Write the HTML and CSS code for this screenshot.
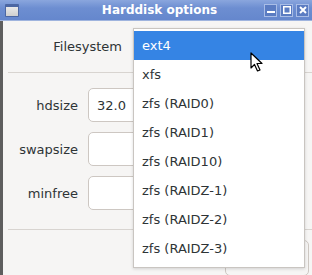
FILE: index.html
```html
<!DOCTYPE html>
<html lang="en">
<head>
    <meta charset="UTF-8">
    <title>Harddisk options</title>
    <link rel="stylesheet" href="styles.css">
</head>
<body>

    <div class="window">
        <!-- title bar -->
        <div class="titlebar">
            <span class="app-icon"></span>
            <span class="title">Harddisk options</span>
            <div class="wm-buttons">
                <span class="wm-btn"><svg width="8" height="8" viewBox="0 0 8 8"><rect x="0" y="5" width="8" height="2" fill="#fff"/></svg></span>
                <span class="wm-btn"><svg width="8" height="8" viewBox="0 0 8 8"><rect x="0.75" y="0.75" width="6.5" height="6.5" fill="none" stroke="#fff" stroke-width="1.5"/></svg></span>
                <span class="wm-btn"><svg width="8" height="8" viewBox="0 0 8 8"><path d="M1 1L7 7M7 1L1 7" stroke="#fff" stroke-width="2"/></svg></span>
            </div>
        </div>

        <div class="content">
            <div class="fs-row">
                <label class="fs-label">Filesystem</label>
                <div class="combo">ext4</div>
            </div>
            <div class="sep"></div>

            <div class="field">
                <label>hdsize</label>
                <input type="text" value="32.0">
            </div>
            <div class="field">
                <label>swapsize</label>
                <input type="text">
            </div>
            <div class="field">
                <label>minfree</label>
                <input type="text">
            </div>

            <div class="sep bottom-sep"></div>
            <div class="actions">
                <button>OK</button>
            </div>
        </div>

        <!-- open filesystem dropdown -->
        <ul class="popup">
            <li class="active">ext4</li>
            <li>xfs</li>
            <li>zfs (RAID0)</li>
            <li>zfs (RAID1)</li>
            <li>zfs (RAID10)</li>
            <li>zfs (RAIDZ-1)</li>
            <li>zfs (RAIDZ-2)</li>
            <li>zfs (RAIDZ-3)</li>
        </ul>

        <svg class="cursor" width="14" height="21" viewBox="0 0 14 21">
            <path d="M1 1 L1 16 L4.5 12.5 L7.5 19 L10 18 L7 11.5 L12 11.5 Z" fill="#fff" stroke="#000" stroke-width="1.2" stroke-linejoin="round"/>
        </svg>
    </div>

</body>
</html>
```

FILE: styles.css
```css
body {
    margin: 0;
    padding: 0;
    font-family: "DejaVu Sans", sans-serif;
    font-size: 13px;
    color: #2e3436;
}

.window {
    position: relative;
    width: 312px;
    height: 275px;
    overflow: hidden;
    background-color: #f6f5f4;
    display: flex;
    flex-direction: column;
}

.titlebar {
    height: 20px;
    flex-shrink: 0;
    display: flex;
    align-items: center;
    background: linear-gradient(#8aa6dd, #6d8ed1 40%, #6587cd);
    border-bottom: 1px solid #9fb4de;
    padding: 0 3px 0 5px;
}

.app-icon {
    width: 12px;
    height: 9px;
    border: 1px solid #4c67a3;
    border-top-width: 3px;
    background: linear-gradient(#e9e9e9, #cfcfcf);
    border-radius: 1px;
}

.title {
    flex: 1;
    text-align: center;
    color: #fff;
    font-weight: bold;
    font-size: 12px;
    padding-left: 36px;
}

.wm-buttons {
    display: flex;
    gap: 3px;
}

.wm-btn {
    width: 11px;
    height: 11px;
    border: 1px solid #a9bde6;
    background-color: #5b7cc2;
    display: flex;
    align-items: center;
    justify-content: center;
}

.content {
    flex: 1;
    display: flex;
    flex-direction: column;
    border-left: 3px solid #5e5e5e;
}

.fs-row {
    display: flex;
    align-items: center;
    height: 34px;
    margin-top: 8px;
}

.fs-label {
    width: 119px;
    text-align: right;
    margin-right: 11px;
}

.combo {
    flex: 1;
    padding-left: 8px;
}

.sep {
    height: 1px;
    background-color: #d8d4d0;
    margin: 9px 0 0 5px;
}

.field {
    display: flex;
    align-items: center;
    margin-top: 10px;
}

.sep + .field {
    margin-top: 15px;
}

.field label {
    width: 75px;
    text-align: right;
    margin-right: 10px;
}

.field input {
    width: 120px;
    height: 34px;
    box-sizing: border-box;
    border: 1px solid #cdc7c2;
    border-radius: 5px;
    background-color: #fff;
    font-family: inherit;
    font-size: 13px;
    color: #2e3436;
    padding: 0 8px;
}

.bottom-sep {
    margin-top: 19px;
}

.actions {
    display: flex;
    justify-content: flex-end;
    padding: 10px 3px 0 0;
}

.actions button {
    width: 84px;
    height: 36px;
    border: 1px solid #cdc7c2;
    border-radius: 5px;
    background-color: #f6f5f4;
}

.popup {
    position: absolute;
    left: 133px;
    top: 28px;
    width: 170px;
    margin: 0;
    padding: 2px 0 4px;
    list-style: none;
    background-color: #fff;
    border: 1px solid #c9c5c1;
    box-shadow: 0 1px 3px rgba(0, 0, 0, 0.15);
}

.popup li {
    height: 29px;
    line-height: 29px;
    padding-left: 8px;
}

.popup li.active {
    background-color: #3584e4;
    color: #fff;
}

.cursor {
    position: absolute;
    left: 250px;
    top: 52px;
}
```
